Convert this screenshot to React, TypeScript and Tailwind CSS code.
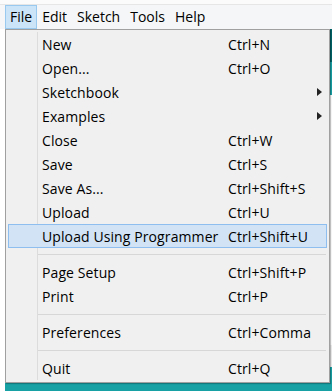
import React from 'react'

type Item =
  | { kind: 'item'; label: string; shortcut?: string; submenu?: boolean; active?: boolean }
  | { kind: 'sep' }

const ITEMS: Item[] = [
  { kind: 'item', label: 'New', shortcut: 'Ctrl+N' },
  { kind: 'item', label: 'Open...', shortcut: 'Ctrl+O' },
  { kind: 'item', label: 'Sketchbook', submenu: true },
  { kind: 'item', label: 'Examples', submenu: true },
  { kind: 'item', label: 'Close', shortcut: 'Ctrl+W' },
  { kind: 'item', label: 'Save', shortcut: 'Ctrl+S' },
  { kind: 'item', label: 'Save As...', shortcut: 'Ctrl+Shift+S' },
  { kind: 'item', label: 'Upload', shortcut: 'Ctrl+U' },
  { kind: 'item', label: 'Upload Using Programmer', shortcut: 'Ctrl+Shift+U', active: true },
  { kind: 'sep' },
  { kind: 'item', label: 'Page Setup', shortcut: 'Ctrl+Shift+P' },
  { kind: 'item', label: 'Print', shortcut: 'Ctrl+P' },
  { kind: 'sep' },
  { kind: 'item', label: 'Preferences', shortcut: 'Ctrl+Comma' },
  { kind: 'sep' },
  { kind: 'item', label: 'Quit', shortcut: 'Ctrl+Q' },
]

const MENUS = ['File', 'Edit', 'Sketch', 'Tools', 'Help']

export default function App() {
  return (
    <div
      className="relative w-[332px] h-[391px] overflow-hidden flex flex-col bg-white text-black text-[14px]"
      style={{ fontFamily: '"Open Sans", "Noto Sans", sans-serif' }}
    >
      <div className="h-[5px] bg-[#fbfbfb] border-b border-[#e6e6e6]" />

      {/* menu bar */}
      <div className="h-[24px] bg-[#f5f6f7] flex items-stretch pl-[5px]">
        {MENUS.map((m, i) => (
          <div
            key={m}
            className={`flex items-center px-[4px] leading-none ${
              i === 0 ? 'bg-[#cce4f7] border border-[#99c9ef]' : 'border border-transparent'
            }`}
          >
            {m}
          </div>
        ))}
      </div>

      {/* window content behind the menu */}
      <div className="flex-1 flex">
        <div className="flex-1 bg-white" />
        <div className="w-[2px] flex flex-col">
          <div className="h-[33px] bg-[#006468]" />
          <div className="h-[33px] bg-[#17a1a5]" />
          <div className="flex-1 bg-white" />
          <div className="h-[22px] bg-[#f0f0f0]" />
          <div className="h-[24px] bg-[#17a1a5]" />
        </div>
      </div>
      <div className="absolute left-[5px] right-0 bottom-0 h-[8px] bg-[#17a1a5]" />

      {/* File dropdown */}
      <div className="absolute left-[5px] top-[29px] w-[325px] bg-[#f0f0f0] border border-[#a0a0a0] shadow-[1px_1px_1px_rgba(0,0,0,0.25)] py-[2px] tracking-[0.1px]">
        <div className="absolute left-[31px] top-[2px] bottom-[2px] w-px bg-[#dcdcdc]" />
        {ITEMS.map((it, i) =>
          it.kind === 'sep' ? (
            <div key={i} className="h-[12px] flex items-center pl-[32px] pr-[3px]">
              <div className="h-px w-full bg-[#d7d7d7]" />
            </div>
          ) : (
            <div
              key={i}
              className={`relative h-[24px] mx-[2px] flex items-center border ${
                it.active ? 'bg-[#d1e3f5] border-[#8ebdf0]' : 'border-transparent'
              }`}
            >
              <span className="pl-[33px] w-[219px] whitespace-nowrap">{it.label}</span>
              {it.shortcut && <span className="whitespace-nowrap">{it.shortcut}</span>}
              {it.submenu && (
                <span className="absolute right-[4px] top-1/2 -translate-y-1/2 w-0 h-0 border-y-[4px] border-y-transparent border-l-[5px] border-l-[#222]" />
              )}
            </div>
          )
        )}
      </div>
    </div>
  )
}
